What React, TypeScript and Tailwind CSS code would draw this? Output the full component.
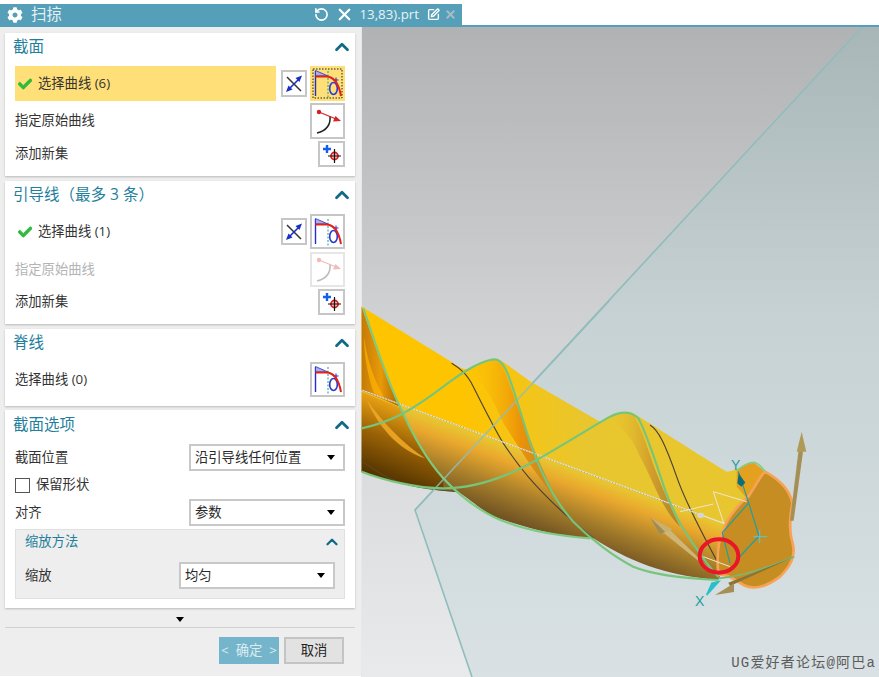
import React from "react";
import { ChevronUp, RotateCw, SquarePen, X } from "lucide-react";
import { FaCheck, FaCog } from "react-icons/fa";

const SwapIcon = () => (
  <button className="flex w-[26px] h-[27px] items-center justify-center border-2 border-[#c6c6c6] bg-white">
    <svg width="22" height="23" viewBox="0 0 22 23">
      <path d="M4 5L18 19" stroke="#333" strokeWidth="1.5" />
      <path d="M16 7L6 17" stroke="#1a2fc4" strokeWidth="1.6" />
      <path d="M19 3.5L12.5 6L16.5 10Z" fill="#1a2fc4" />
      <path d="M3 20L9.5 17.5L5.5 13.5Z" fill="#1a2fc4" />
    </svg>
  </button>
);

const CurveIcon = ({ selected }: { selected?: boolean }) => (
  <button
    className={
      selected
        ? "flex w-[35px] h-[35px] items-center justify-center bg-[#ffdf77]"
        : "flex w-[35px] h-[35px] items-center justify-center border-2 border-[#c6c6c6] bg-white"
    }
  >
    <svg width="31" height="31" viewBox="0 0 31 31">
      {selected && <rect x="1" y="1" width="29" height="29" fill="none" stroke="#222" strokeWidth="1" strokeDasharray="1.5 1.5" />}
      <path d="M3.5 3V28" stroke="#2230c8" strokeWidth="1.4" />
      <path d="M3.5 2.5L16 8H3.5Z" fill="#a9afec" stroke="#2230c8" strokeWidth="0.8" />
      <path d="M16 3V30" stroke="#1d9d8e" strokeWidth="1" strokeDasharray="2 1.5" />
      <ellipse cx="21.5" cy="20.5" rx="3.8" ry="6" fill="none" stroke="#2b3ad0" strokeWidth="1.6" />
      <path d="M24 9.5V14.5M21.5 12H26.5" stroke="#2230c8" strokeWidth="1" />
      <path d="M3.5 8.5H14C21 8.5 26.5 14 29 28" fill="none" stroke="#e2231a" strokeWidth="2" />
    </svg>
  </button>
);

const OriginIcon = ({ disabled }: { disabled?: boolean }) => (
  <button
    className={
      disabled
        ? "flex w-[35px] h-[35px] items-center justify-center border-2 border-[#e6e6e6] bg-white"
        : "flex w-[35px] h-[36px] items-center justify-center border-2 border-[#c6c6c6] bg-white"
    }
  >
    <svg width="31" height="31" viewBox="0 0 31 31" opacity={disabled ? 0.3 : 1}>
      <path d="M5 27C13 25 19 20 18 10" fill="none" stroke="#222" strokeWidth="1.5" />
      <path d="M7 6L24 13" stroke="#d92323" strokeWidth="1.3" />
      <circle cx="7" cy="6" r="2.2" fill="#d41f1f" />
      <path d="M29 15L21 15.5L23.5 10Z" fill="#d92323" />
    </svg>
  </button>
);

const AddSetIcon = () => (
  <button className="flex w-[27px] h-[26px] items-center justify-center border-2 border-[#c6c6c6] bg-white">
    <svg width="23" height="22" viewBox="0 0 23 22">
      <path d="M7 2V10M3 6H11" stroke="#1560e8" strokeWidth="2.4" />
      <circle cx="14.5" cy="13" r="3.6" fill="#f7b5b5" stroke="#e01818" strokeWidth="1.6" />
      <path d="M14.5 6V20M8 13H21" stroke="#111" strokeWidth="1.2" />
    </svg>
  </button>
);

const Caret = () => <span className="w-0 h-0 border-x-[4px] border-x-transparent border-t-[5px] border-t-black" />;

const Select = ({ value }: { value: string }) => (
  <div className="flex w-[156px] h-[27px] items-center justify-between border-2 border-[#c8c8c8] bg-white pl-[4px] pr-[8px] text-[#2a2a2a]">
    <span>{value}</span>
    <Caret />
  </div>
);

const Card = ({ title, children, className }: { title: string; children: React.ReactNode; className: string }) => (
  <section className={"bg-white px-[10px] shadow-[0_1px_2px_rgba(0,0,0,0.22)] " + className}>
    <div className="flex h-[28px] items-center justify-between pb-[3px]">
      <h2 className="ml-[-2px] text-[15.5px] text-[#1f7f9c]">{title}</h2>
      <ChevronUp size={22} strokeWidth={3} className="mr-[-8px] text-[#0f6a86]" />
    </div>
    {children}
  </section>
);

const Picked = ({ label }: { label: string }) => (
  <span className="flex items-center gap-[6px] pl-[3px] text-[#333]">
    <FaCheck size={14} stroke="currentColor" strokeWidth={30} className="text-[#2fbb3c]" />
    {label}
  </span>
);

// 3D viewport: coordinates inside the <g> follow the reference crop, scale 3x
const Viewport = () => (
  <svg className="absolute inset-0" width="518" height="650" viewBox="361 27 518 650">
    <defs>
      <linearGradient id="bg" x1="0" y1="0" x2="0" y2="1">
        <stop offset="0" stopColor="#b1b2b4" />
        <stop offset="0.45" stopColor="#d0d1d3" />
        <stop offset="1" stopColor="#e9eaeb" />
      </linearGradient>
      <linearGradient id="plane" gradientUnits="userSpaceOnUse" x1="0" y1="27" x2="0" y2="677">
        <stop offset="0" stopColor="#a9b6b8" />
        <stop offset="0.45" stopColor="#c6d2d3" />
        <stop offset="1" stopColor="#d9e1e4" />
      </linearGradient>
      <linearGradient id="body" gradientUnits="userSpaceOnUse" x1="640" y1="170" x2="420" y2="770">
        <stop offset="0" stopColor="#e9c62c" />
        <stop offset="0.5" stopColor="#e8c630" />
        <stop offset="0.57" stopColor="#eaa82d" />
        <stop offset="0.7" stopColor="#a47c2a" />
        <stop offset="0.82" stopColor="#735523" />
        <stop offset="1" stopColor="#5c4317" />
      </linearGradient>
      <linearGradient id="warm" gradientUnits="userSpaceOnUse" x1="300" y1="0" x2="680" y2="0">
        <stop offset="0" stopColor="#ffc400" />
        <stop offset="1" stopColor="#ffc400" stopOpacity="0" />
      </linearGradient>
      <linearGradient id="fluteA" x1="0" y1="0" x2="1" y2="0">
        <stop offset="0" stopColor="#ffc400" stopOpacity="0" />
        <stop offset="0.6" stopColor="#ec9208" />
        <stop offset="1" stopColor="#b8862e" />
      </linearGradient>
      <linearGradient id="fluteB" x1="0" y1="0" x2="1" y2="0">
        <stop offset="0" stopColor="#e8c932" stopOpacity="0" />
        <stop offset="0.6" stopColor="#d09a2c" stopOpacity="0.9" />
        <stop offset="1" stopColor="#a98030" />
      </linearGradient>
      <linearGradient id="flank" x1="0" y1="0" x2="1" y2="0">
        <stop offset="0" stopColor="#c47a08" />
        <stop offset="0.5" stopColor="#e89a08" />
        <stop offset="1" stopColor="#a86400" />
      </linearGradient>
      <linearGradient id="under" gradientUnits="userSpaceOnUse" x1="170" y1="340" x2="90" y2="550">
        <stop offset="0" stopColor="#e8a012" />
        <stop offset="0.45" stopColor="#9a6206" />
        <stop offset="1" stopColor="#4e3000" />
      </linearGradient>
    </defs>
    <rect x="361" y="27" width="518" height="650" fill="url(#bg)" />
    <rect x="361" y="27" width="1" height="650" fill="#e8e8e8" />
    <path d="M862 27H879V677H472L415 510Z" fill="url(#plane)" />
    <path d="M862 27L415 510L472 677" fill="none" stroke="#8fbdbc" strokeWidth="1.6" />
    <g transform="translate(360 300) scale(0.33333)" fill="none">
      <path
        d="M5 20L280 190C300 205 310 208 320 208C350 195 380 178 405 178C425 178 440 195 520 250L720 365C750 350 780 335 805 335C820 335 835 350 1100 515C1130 515 1150 490 1180 487L1215 515L1075 840C950 830 830 800 700 715C600 710 520 690 400 650C350 620 310 580 290 575C200 570 100 550 5 515Z"
        fill="url(#body)"
      />
      <path d="M5 20L280 190C300 205 310 208 320 208C350 195 380 178 405 178C425 178 440 195 520 250L720 365L700 530L5 270Z" fill="url(#warm)" />
      <path d="M5 20C30 90 70 220 120 320L5 272Z" fill="url(#flank)" />
      <path d="M12 110C22 180 40 235 72 292L42 280C22 225 12 165 12 110Z" fill="#ffb400" opacity="0.7" />
      <path d="M5 275L125 325C160 410 200 480 250 540L250 565C160 560 80 540 5 515Z" fill="url(#under)" />
      <path d="M20 300C70 370 130 430 195 475C130 455 65 400 20 300Z" fill="#f2aa28" opacity="0.85" />
      <path d="M320 210C350 195 380 180 405 178C430 180 450 260 480 340C510 420 530 470 590 600C510 500 470 430 430 370C400 300 370 240 320 210Z" fill="url(#fluteA)" />
      <path d="M740 352C770 340 790 335 805 335C835 345 860 440 890 520C910 570 930 620 960 680C900 620 880 540 840 470C820 420 790 380 740 352Z" fill="url(#fluteB)" />
      <path d="M1130 512C1150 495 1165 487 1180 487L1215 515L1165 600L1130 560Z" fill="#e3a11f" />

      <path d="M275 190C300 205 320 220 340 260C370 320 400 380 430 430C470 490 520 560 640 665C660 680 680 700 700 715" stroke="#4b4436" strokeWidth="3.5" />
      <path d="M870 375C895 390 915 430 950 530C970 590 1010 670 1072 785" stroke="#4b4436" strokeWidth="3.5" />
      <path d="M5 483C50 515 90 540 130 550C190 568 240 570 290 575" stroke="#5b4a2b" strokeWidth="3" />

      <path d="M5 270L1200 710" stroke="#e4e4e0" strokeWidth="3.5" />
      <path d="M5 270L1020 645" stroke="#77776e" strokeWidth="2" strokeDasharray="3 6" />

      <path d="M750 0L165 630" stroke="#8fbdbc" strokeWidth="4.5" opacity="0.85" />

      <path d="M1215 515C1260 540 1290 570 1297 610C1290 650 1285 690 1298 730C1308 770 1290 800 1260 830C1220 860 1180 870 1150 855C1125 840 1100 820 1075 825C1070 770 1075 720 1090 690C1100 650 1150 600 1165 590C1185 560 1200 530 1215 515Z" fill="#c68d22" stroke="#f7a356" strokeWidth="8" />

      <path d="M10 25C40 110 80 240 120 320C160 410 200 480 250 535C300 590 350 625 400 650C470 685 560 705 690 715" stroke="#7ccb80" strokeWidth="6.5" />
      <path d="M5 385C50 375 90 360 120 345C180 315 230 275 270 245C310 215 370 178 405 178C430 178 445 220 470 300C490 360 505 420 530 480C560 550 590 610 640 665C690 715 760 770 820 800C880 825 970 835 1075 840" stroke="#76c57b" strokeWidth="6.5" />
      <path d="M5 515C70 540 170 565 250 565C350 565 450 525 530 480C610 435 680 390 750 350C780 335 810 330 835 355C860 400 885 480 915 570C945 650 975 700 1020 760C1040 790 1060 815 1075 830" stroke="#76c57b" strokeWidth="6.5" />
      <path d="M1075 835C1150 830 1230 800 1303 770" stroke="#76b873" strokeWidth="5" />
      <path d="M1130 512C1150 495 1165 487 1182 487C1195 490 1205 500 1215 515" stroke="#86cc87" strokeWidth="5" />

      <path d="M960 635L1060 612M1060 575L1160 605M1060 575L1092 672M1030 770L1110 800" stroke="#ece7cf" strokeWidth="3" />
      <ellipse cx="1022" cy="646" rx="11" ry="8" fill="#d5d5d5" />

      <path d="M1135 515L1165 605L1197 708M1165 610L1087 698L1110 790M1197 708L1130 780" stroke="#1f9ea2" strokeWidth="3.5" />
      <path d="M1136 520L1156 548L1144 560L1132 550Z" fill="#0a6f78" />
      <path d="M1180 710H1222M1199 690V730" stroke="#58c8d4" strokeWidth="3" />
      <path d="M1076 845L1040 885L1056 850Z" fill="#26c0cb" stroke="#26c0cb" strokeWidth="5" />

      <path d="M1290 662L1317 440L1331 440L1301 662Z" fill="#a68f55" />
      <path d="M1325 395L1339 455L1310 455Z" fill="#b09a58" />
      <path d="M1072 828L912 700L926 686Z" fill="#cdb678" />
      <path d="M870 652L938 688L900 705Z" fill="#c9b06e" />
      <path d="M870 652L900 705L915 695Z" fill="#a08c50" />
      <path d="M1300 772L1110 858L1105 848Z" fill="#8b7338" />
      <path d="M1065 885L1122 850L1122 876Z" fill="#a68f55" />

      <ellipse cx="1077" cy="768" rx="58" ry="50" stroke="#ea1528" strokeWidth="12" />
    </g>
    <text x="731" y="470" fontSize="14" fill="#1f9ea2" fontFamily="'Liberation Sans', sans-serif">Y</text>
    <text x="695" y="606" fontSize="14" fill="#1f9ea2" fontFamily="'Liberation Sans', sans-serif">X</text>
  </svg>
);

export default function App() {
  return (
    <div className="flex h-[677px] w-[879px] flex-col overflow-hidden bg-white text-[13.3px] [font-family:'Open_Sans','Noto_Sans_CJK_SC',sans-serif]">
      <header className="mt-[4px] border-b-2 border-[#559fb9]">
        <div className="flex h-[21px] w-[462px] items-center bg-[#559fb9] text-white">
          <FaCog size={16} className="ml-[7px]" />
          <span className="ml-[8px] text-[15.5px] text-[#e4f0f4]">扫掠</span>
          <RotateCw size={15} strokeWidth={2.6} className="ml-auto scale-x-[-1]" />
          <X size={19} strokeWidth={2.8} className="ml-[6px]" />
          <span className="ml-[5px] text-[13.3px] text-[#e8f3f6]">13,83).prt</span>
          <SquarePen size={13} strokeWidth={2.6} className="ml-[8px]" />
          <X size={13} strokeWidth={3.4} className="ml-[4px] mr-[5px] text-[#a7bdc8]" />
        </div>
      </header>

      <div className="flex flex-1">
        <aside className="flex h-[649px] w-[361px] flex-col bg-[#eeeeee] pl-[5px] pr-[6px] pt-[6px]">
          <Card title="截面" className="h-[143px] pt-[1px]">
            <div className="mt-[4px] flex items-center gap-[4px]">
              <div className="flex h-[35px] w-[261px] items-center bg-[#ffdf77]">
                <Picked label="选择曲线 (6)" />
              </div>
              <div className="ml-[1px]"><SwapIcon /></div>
              <div className="ml-[-1px]"><CurveIcon selected /></div>
            </div>
            <div className="mt-[2px] flex items-center justify-between text-[#333]">
              指定原始曲线
              <OriginIcon />
            </div>
            <div className="mt-[2px] flex items-center justify-between text-[#333]">
              添加新集
              <AddSetIcon />
            </div>
          </Card>

          <Card title="引导线（最多 3 条）" className="mt-[5px] h-[143px] pt-[1px]">
            <div className="mt-[4px] flex items-center justify-between">
              <Picked label="选择曲线 (1)" />
              <div className="flex items-center gap-[3px]">
                <SwapIcon />
                <CurveIcon />
              </div>
            </div>
            <div className="mt-[3px] flex items-center justify-between text-[#b4b4b4]">
              指定原始曲线
              <OriginIcon disabled />
            </div>
            <div className="mt-[2px] flex items-center justify-between text-[#333]">
              添加新集
              <AddSetIcon />
            </div>
          </Card>

          <Card title="脊线" className="mt-[5px] h-[77px] pt-[1px]">
            <div className="mt-[4px] flex items-center justify-between text-[#333]">
              选择曲线 (0)
              <CurveIcon />
            </div>
          </Card>

          <Card title="截面选项" className="mt-[4px] h-[198px] pt-[2px]">
            <div className="mt-[4px] flex items-center justify-between text-[#333]">
              截面位置
              <Select value="沿引导线任何位置" />
            </div>
            <label className="mt-[7px] flex h-[14px] items-center gap-[6px] text-[#333]">
              <span className="h-[15px] w-[15px] border border-[#555] bg-white" />
              保留形状
            </label>
            <div className="mt-[7px] flex items-center justify-between text-[#333]">
              对齐
              <Select value="参数" />
            </div>
            <div className="mt-[3px] h-[70px] border border-[#e0e0e0] bg-[#eeeeee] px-[9px]">
              <div className="flex h-[24px] items-center justify-between">
                <span className="text-[13.3px] text-[#1f7f9c]">缩放方法</span>
                <ChevronUp size={18} strokeWidth={3} className="mr-[-6px] text-[#0f6a86]" />
              </div>
              <div className="mt-[8px] flex items-center justify-between text-[#333]">
                缩放
                <Select value="均匀" />
              </div>
            </div>
          </Card>

          <div className="flex h-[19px] items-center justify-center pt-[4px]">
            <Caret />
          </div>
          <div className="border-t border-[#d2d2d2]" />
          <div className="mt-[9px] flex justify-end gap-[5px] pr-[11px]">
            <button className="flex h-[27px] w-[60px] items-center justify-center gap-[7px] bg-[#74b5cb] text-[#dcecf1]">
              <span>&lt;</span>
              <span>确定</span>
              <span>&gt;</span>
            </button>
            <button className="h-[27px] w-[60px] border-2 border-[#c4c4c4] bg-[#e2e2e2] text-[#222]">取消</button>
          </div>
        </aside>

        <main className="relative flex-1">
          <Viewport />
          <span className="absolute bottom-[3px] right-[3px] text-[14px] tracking-[1.2px] text-[#5c5c5c] [font-family:'Liberation_Mono','Noto_Sans_CJK_SC',monospace]">
            UG爱好者论坛@阿巴a
          </span>
        </main>
      </div>
    </div>
  );
}
